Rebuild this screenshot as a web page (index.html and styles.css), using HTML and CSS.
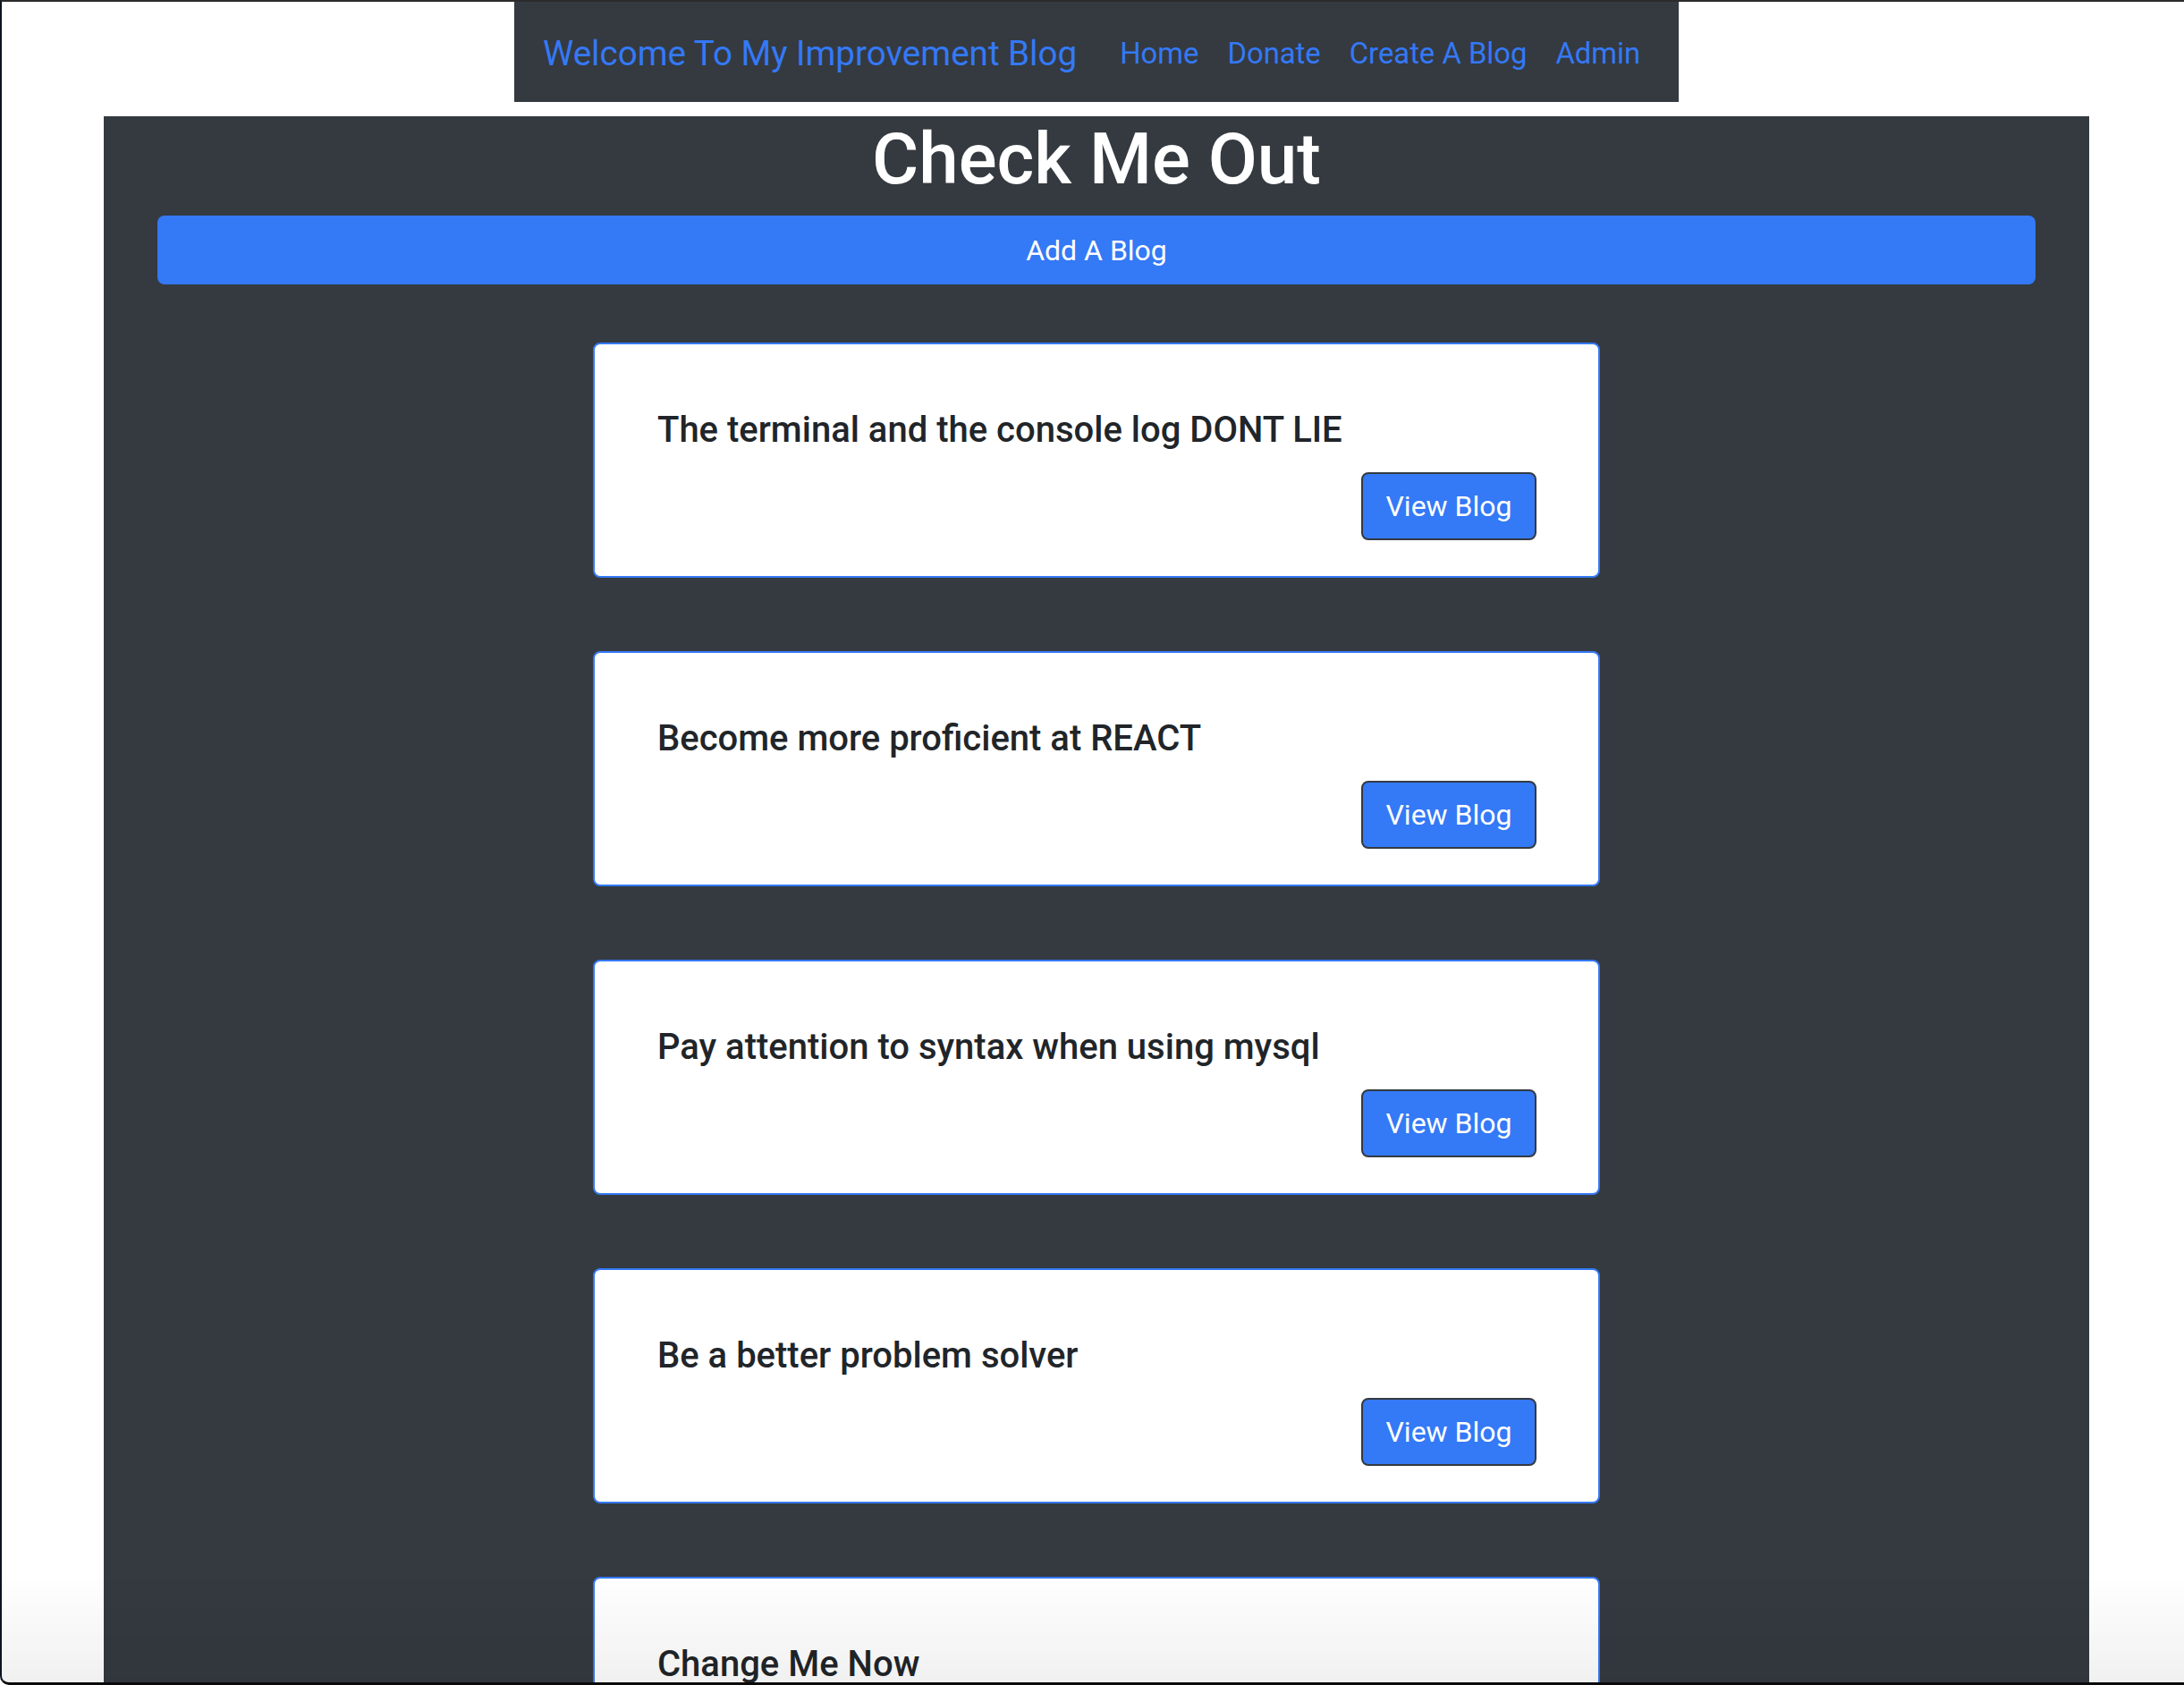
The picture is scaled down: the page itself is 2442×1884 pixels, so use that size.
FILE: index.html
```html
<!DOCTYPE html>
<html lang="en">
<head>
<meta charset="utf-8">
<title>Welcome To My Improvement Blog</title>
<link rel="stylesheet" href="styles.css">
</head>
<body>
<div class="page">
  <nav class="navbar">
    <a class="brand" href="#">Welcome To My Improvement Blog</a>
    <a class="nav-link" href="#">Home</a>
    <a class="nav-link" href="#">Donate</a>
    <a class="nav-link" href="#">Create A Blog</a>
    <a class="nav-link" href="#">Admin</a>
  </nav>
  <main class="main">
    <h1 class="title">Check Me Out</h1>
    <button class="add-btn">Add A Blog</button>
    <div class="cards">
      <div class="card">
        <h5 class="card-title">The terminal and the console log DONT LIE</h5>
        <div class="card-actions"><button class="view-btn">View Blog</button></div>
      </div>
      <div class="card">
        <h5 class="card-title">Become more proficient at REACT</h5>
        <div class="card-actions"><button class="view-btn">View Blog</button></div>
      </div>
      <div class="card">
        <h5 class="card-title">Pay attention to syntax when using mysql</h5>
        <div class="card-actions"><button class="view-btn">View Blog</button></div>
      </div>
      <div class="card">
        <h5 class="card-title">Be a better problem solver</h5>
        <div class="card-actions"><button class="view-btn">View Blog</button></div>
      </div>
      <div class="card">
        <h5 class="card-title">Change Me Now</h5>
        <div class="card-actions"><button class="view-btn">View Blog</button></div>
      </div>
    </div>
  </main>
</div>
<div class="frame"></div>
</body>
</html>
```

FILE: styles.css
```css
html, body {
  margin: 0;
  padding: 0;
  background: #ffffff;
}
body {
  font-family: Roboto, "Noto Sans", "Liberation Sans", sans-serif;
  color: #212529;
  overflow: hidden;
  height: 1884px;
}
.page {
  padding-left: 10px;
}
.navbar {
  width: 1302px;
  height: 114px;
  box-sizing: border-box;
  margin: 0 auto 16px;
  background: #343a40;
  display: flex;
  align-items: center;
  padding: 5px 32px 0;
  white-space: nowrap;
}
.brand {
  font-size: 38.6px;
  color: #3479f6;
  text-decoration: none;
  margin-right: 32px;
  line-height: 60px;
}
.nav-link {
  font-size: 32.8px;
  color: #3479f6;
  text-decoration: none;
  padding: 0 16px;
  line-height: 48px;
}
.main {
  width: 2220px;
  box-sizing: border-box;
  margin: 0 auto;
  background: #343a40;
  padding: 0 60px 200px;
  min-height: 1800px;
}
.title {
  margin: 0 0 15px;
  font-size: 80px;
  font-weight: 500;
  line-height: 96px;
  color: #ffffff;
  text-align: center;
}
.add-btn {
  display: block;
  width: 100%;
  height: 77px;
  border: none;
  border-radius: 8px;
  background: #3479f6;
  color: #ffffff;
  font-family: inherit;
  font-size: 32px;
  line-height: 48px;
}
.cards {
  margin-top: 65px;
  display: flex;
  flex-direction: column;
  align-items: center;
  gap: 82px;
}
.card {
  width: 1126px;
  box-sizing: border-box;
  background: #ffffff;
  border: 2px solid #3479f6;
  border-radius: 8px;
  padding: 72px 69px 40px 70px;
}
.card-title {
  margin: 0 0 23px;
  font-size: 40px;
  font-weight: 500;
  line-height: 48px;
  color: #212529;
  white-space: nowrap;
}
.card-actions {
  display: flex;
  justify-content: flex-end;
}
.view-btn {
  background: #3479f6;
  color: #ffffff;
  border: 2px solid #343a40;
  border-radius: 8px;
  font-family: inherit;
  font-size: 32px;
  line-height: 48px;
  padding: 12px 0;
  width: 196px;
  height: 76px;
  white-space: nowrap;
}
.frame {
  position: fixed;
  left: 0;
  top: 0;
  width: 2442px;
  height: 1884px;
  box-sizing: border-box;
  border-top: 2px solid #2b2b2b;
  border-left: 2px solid #0e1321;
  border-bottom: 3px solid #0a0a0a;
  border-bottom-left-radius: 10px;
  pointer-events: none;
  background: linear-gradient(to bottom, rgba(0,0,0,0) 0, rgba(0,0,0,0) 1760px, rgba(0,0,0,0.06) 1884px);
}
```
